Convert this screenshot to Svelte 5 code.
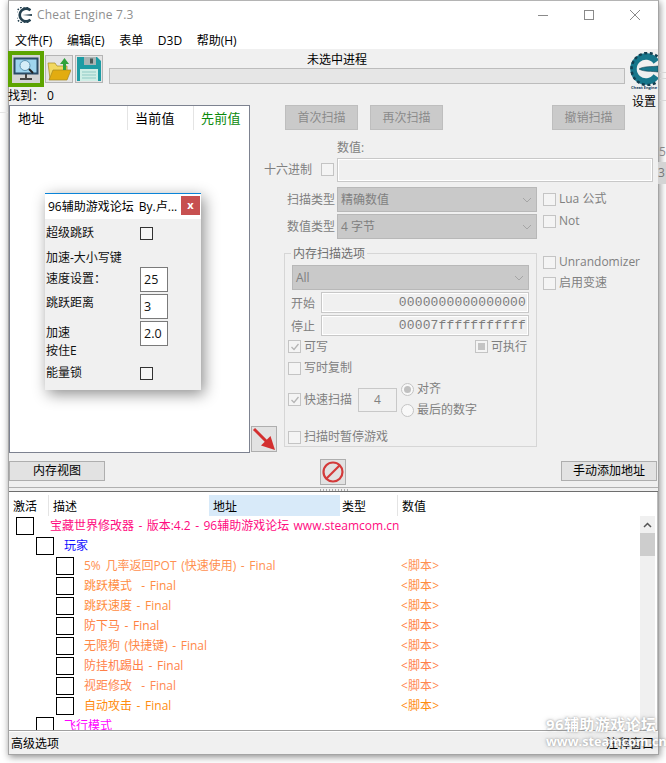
<script>
	const menus = ['文件(F)', '编辑(E)', '表单', 'D3D', '帮助(H)'];
	const cheats = [
		{ name: '5% 几率返回POT (快速使用) - Final', color: '#ff9050' },
		{ name: '跳跃模式  - Final', color: '#ff8c40' },
		{ name: '跳跃速度 - Final', color: '#ff8c40' },
		{ name: '防下马 - Final', color: '#ff8040' },
		{ name: '无限狗 (快捷键) - Final', color: '#ff8848' },
		{ name: '防挂机踢出 - Final', color: '#ff8048' },
		{ name: '视距修改  - Final', color: '#ff8850' },
		{ name: '自动攻击 - Final', color: '#ff8c10' }
	];
</script>

<div class="page">
	<div class="behind left-line"></div>
	<div class="behind right-line one"></div>
	<div class="behind right-line two"></div>
	<div class="behind right-line three"></div>
	<div class="behind cell-a">53</div>
	<div class="behind cell-b">3</div>

	<div class="window">
		<header class="titlebar">
			<svg class="title-icon" viewBox="0 0 30 30">
				<path d="M25 6A12 12 0 1 0 25 24" fill="none" stroke="#24404f" stroke-width="5" />
				<path d="M25 6A15 15 0 1 0 25 24" fill="none" stroke="#24404f" stroke-width="3" stroke-dasharray="3 3" />
				<path d="M10 15L28 13V17Z" fill="#24404f" />
			</svg>
			<span class="title-text">Cheat Engine 7.3</span>
			<div class="caption">
				<svg width="12" height="12" viewBox="0 0 12 12"><path d="M1 6.5H11" stroke="#8a8a8a" /></svg>
				<svg width="12" height="12" viewBox="0 0 12 12"><rect x="1.5" y="1.5" width="9" height="9" fill="none" stroke="#8a8a8a" /></svg>
				<svg width="12" height="12" viewBox="0 0 12 12"><path d="M1 1L11 11M11 1L1 11" stroke="#8a8a8a" /></svg>
			</div>
		</header>
		<nav class="menubar">
			{#each menus as m}<span>{m}</span>{/each}
		</nav>

		<section class="top">
			<div class="top-left">
				<div class="tools">
					<div class="tool active">
						<svg viewBox="0 0 26 26" width="26" height="26">
							<rect x="1.5" y="2.5" width="23" height="15" fill="#9fd4ee" stroke="#2a4b66" stroke-width="2" />
							<circle cx="12" cy="9.5" r="5" fill="#d4edf8" stroke="#5c93b3" />
							<path d="M16 13L20 17" stroke="#222" stroke-width="2" />
							<path d="M13 18V22M7 23H19" stroke="#444" stroke-width="2" />
						</svg>
					</div>
					<div class="tool">
						<svg viewBox="0 0 24 24" width="24" height="24">
							<path d="M1 6H8L10 9H20V22H3Z" fill="#f2d860" stroke="#a88a20" stroke-width=".7" />
							<path d="M6 13H24L20 23H2Z" fill="#e2ac10" stroke="#a88a20" stroke-width=".7" />
							<path d="M16 13V7H13L17.500 1L22 7H19V13Z" fill="#2fa23a" />
						</svg>
					</div>
					<div class="tool">
						<svg viewBox="0 0 24 24" width="24" height="24">
							<path d="M0 0H20L24 4V24H0Z" fill="#1d9ca4" />
							<rect x="7" y="0" width="12" height="8" fill="#a9b5b5" />
							<rect x="13" y="1.500" width="3" height="5" fill="#4b5a5a" />
							<rect x="3" y="12" width="18" height="12" fill="#cfeee6" />
							<path d="M5 15H19M5 18H19M5 21H19" stroke="#8fc9c4" />
						</svg>
					</div>
				</div>
				<div class="found">找到： 0</div>
			</div>
			<div class="progress-wrap">
				<div class="process-name">未选中进程</div>
				<div class="progress"></div>
			</div>
			<div class="logo-wrap">
				<svg class="logo" viewBox="0 0 28 34">
					<path d="M26.200 9.800A12.500 12.500 0 1 0 26.200 24.200" fill="none" stroke="#17778c" stroke-width="6.500" />
					<path d="M27.500 4.500A16 16 0 1 0 27.500 29.500" fill="none" stroke="#123f50" stroke-width="2.500" stroke-dasharray="3 2.500" />
					<path d="M9 17C14 14 22 15 28 14V20C22 19 14 20 9 17Z" fill="#17778c" stroke="#123f50" stroke-width=".6" />
				</svg>
				<span class="logo-caption">Cheat Engine</span>
				<span class="settings">设置</span>
			</div>
		</section>

		<section class="middle">
			<div class="address-list">
				<div class="addr-head">
					<span class="h-addr">地址</span>
					<span class="h-cur">当前值</span>
					<span class="h-prev">先前值</span>
				</div>
			</div>

			<div class="panel">
				<div class="scan-buttons">
					<button class="off" disabled>首次扫描</button>
					<button class="off" disabled>再次扫描</button>
					<button class="off undo" disabled>撤销扫描</button>
				</div>

				<div class="value-label">数值:</div>
				<div class="value-row">
					<span class="dim">十六进制</span>
					<span class="check"></span>
					<div class="field grow"></div>
				</div>

				<div class="type-area">
					<div class="type-rows">
						<div class="type-row">
							<span class="dim">扫描类型</span>
							<div class="combo"><span>精确数值</span><svg width="10" height="6" viewBox="0 0 10 6"><path d="M1 1L5 5L9 1" fill="none" stroke="#a5a5a5" /></svg></div>
						</div>
						<div class="type-row">
							<span class="dim">数值类型</span>
							<div class="combo"><span>4 字节</span><svg width="10" height="6" viewBox="0 0 10 6"><path d="M1 1L5 5L9 1" fill="none" stroke="#a5a5a5" /></svg></div>
						</div>
					</div>
					<div class="side-checks">
						<label class="opt"><span class="check"></span><span class="dim">Lua 公式</span></label>
						<label class="opt"><span class="check"></span><span class="dim">Not</span></label>
					</div>
				</div>

				<div class="lower">
					<button class="tool-btn arrow" aria-label="添加">
						<svg viewBox="0 0 24 24" width="24" height="24">
							<path d="M2 2L15 15" stroke="#d32f2f" stroke-width="3" />
							<path d="M9 18.500L23 23L18.500 9Z" fill="#d32f2f" />
						</svg>
					</button>
					<fieldset class="options">
						<legend>内存扫描选项</legend>
						<div class="combo wide"><span>All</span><svg width="10" height="6" viewBox="0 0 10 6"><path d="M1 1L5 5L9 1" fill="none" stroke="#a5a5a5" /></svg></div>
						<div class="range"><span class="dim">开始</span><div class="field mono">0000000000000000</div></div>
						<div class="range"><span class="dim">停止</span><div class="field mono">00007fffffffffff</div></div>
						<div class="perm">
							<label class="opt"><span class="check ticked"><svg width="10" height="10" viewBox="0 0 10 10"><path d="M1.500 5L4 7.500L8.500 2" fill="none" stroke="#b5b5b5" stroke-width="1.300" /></svg></span><span class="dim">可写</span></label>
							<label class="opt"><span class="check partial"><i></i></span><span class="dim">可执行</span></label>
						</div>
						<label class="opt cow"><span class="check"></span><span class="dim">写时复制</span></label>
						<div class="fast">
							<label class="opt"><span class="check ticked"><svg width="10" height="10" viewBox="0 0 10 10"><path d="M1.500 5L4 7.500L8.500 2" fill="none" stroke="#b5b5b5" stroke-width="1.300" /></svg></span><span class="dim">快速扫描</span></label>
							<div class="field small">4</div>
							<div class="radios">
								<label class="opt"><span class="radio on"></span><span class="dim">对齐</span></label>
								<label class="opt"><span class="radio"></span><span class="dim">最后的数字</span></label>
							</div>
						</div>
						<label class="opt pause"><span class="check"></span><span class="dim">扫描时暂停游戏</span></label>
					</fieldset>
					<div class="side-checks lower-checks">
						<label class="opt"><span class="check"></span><span class="dim">Unrandomizer</span></label>
						<label class="opt"><span class="check"></span><span class="dim">启用变速</span></label>
					</div>
				</div>
			</div>
		</section>

		<section class="actions">
			<button class="plain">内存视图</button>
			<button class="tool-btn stop" aria-label="停止">
				<svg viewBox="0 0 24 24" width="24" height="24">
					<circle cx="12" cy="12" r="9.500" fill="none" stroke="#d33a3a" stroke-width="2.200" />
					<path d="M5.500 18.500L18.500 5.500" stroke="#d33a3a" stroke-width="2.200" />
				</svg>
			</button>
			<button class="plain">手动添加地址</button>
		</section>

		<div class="splitter"><span></span></div>

		<section class="table">
			<div class="thead">
				<span class="c-active">激活</span>
				<span class="c-desc">描述</span>
				<span class="c-addr">地址</span>
				<span class="c-type">类型</span>
				<span class="c-val">数值</span>
			</div>
			<div class="tbody">
				<div class="rows">
					<div class="row"><span class="box"></span><span class="root-name">宝藏世界修改器 - 版本:4.2 - 96辅助游戏论坛 www.steamcom.cn</span></div>
					<div class="row lvl1"><span class="box"></span><span class="group-name">玩家</span></div>
					{#each cheats as c}
						<div class="row lvl2" style="color:{c.color}">
							<span class="box"></span>
							<span class="cheat-name">{c.name}</span>
							<span class="script">&lt;脚本&gt;</span>
						</div>
					{/each}
					<div class="row lvl1"><span class="box"></span><span class="fly-name">飞行模式</span></div>
				</div>
				<div class="scrollbar">
					<div class="sb-up"><svg width="9" height="6" viewBox="0 0 9 6"><path d="M1 5L4.500 1.500L8 5" fill="none" stroke="#555" stroke-width="1.500" /></svg></div>
					<div class="sb-thumb"></div>
				</div>
			</div>
		</section>

		<footer class="status">
			<span>高级选项</span>
			<span>注释窗口</span>
		</footer>
	</div>

	<div class="watermark">
		<div class="wm-cn">96辅助游戏论坛</div>
		<div class="wm-url">www.steamcom.cn</div>
	</div>

	<div class="dialog">
		<div class="dlg-head">
			<span class="dlg-title">96辅助游戏论坛 By.卢...</span>
			<span class="dlg-close">x</span>
		</div>
		<div class="dlg-body">
			<div class="dlg-row r-jump"><span>超级跳跃</span><span class="dlg-check"></span></div>
			<div class="dlg-note">加速-大小写键</div>
			<div class="dlg-row r-input r-speedset"><span>速度设置：</span><span class="dlg-input">25</span></div>
			<div class="dlg-row r-input r-dist"><span>跳跃距离</span><span class="dlg-input">3</span></div>
			<div class="dlg-row r-speed"><span>加速<br />按住E</span><span class="dlg-input">2.0</span></div>
			<div class="dlg-row r-lock"><span>能量锁</span><span class="dlg-check"></span></div>
		</div>
	</div>
</div>

<style>
	:global(body) {
		margin: 0;
		background: #fff;
	}
	.page {
		position: relative;
		width: 666px;
		height: 763px;
		overflow: hidden;
		background: #fff;
		color: #000;
		font-family: 'Open Sans', 'Noto Sans CJK SC', sans-serif;
		font-size: 12px;
		line-height: 16px;
	}
	button {
		font: inherit;
		padding: 0;
		margin: 0;
	}
	.behind {
		position: absolute;
	}
	.left-line {
		left: 0;
		top: 112px;
		width: 8px;
		height: 1px;
		background: #e4e4e4;
	}
	.right-line {
		left: 660px;
		width: 6px;
		height: 1px;
		background: #d8d8d8;
	}
	.one { top: 72px; }
	.two { top: 78px; }
	.three { top: 100px; }
	.cell-a {
		left: 659px;
		top: 144px;
		color: #888;
	}
	.cell-b {
		left: 658px;
		top: 162px;
		width: 8px;
		height: 22px;
		line-height: 22px;
		background: #d4d4d4;
		color: #777;
	}

	.window {
		box-sizing: border-box;
		margin-left: 8px;
		width: 651px;
		height: 755px;
		border: 1px solid #a4a4a4;
		border-top-color: #b4b4b4;
		background: #f0f0f0;
		box-shadow: 1px 2px 7px rgba(0, 0, 0, 0.45);
		display: flex;
		flex-direction: column;
	}
	.titlebar {
		height: 31px;
		box-sizing: border-box;
		padding: 0 0 3px 8px;
		background: #fff;
		display: flex;
		align-items: center;
		flex: none;
	}
	.title-icon {
		width: 16px;
		height: 16px;
		margin-right: 4px;
	}
	.title-text {
		color: #8f8f8f;
		font-size: 12px;
		letter-spacing: 0.2px;
	}
	.caption {
		margin-left: auto;
		display: flex;
		gap: 34px;
		padding-right: 17px;
	}
	.menubar {
		height: 17px;
		background: #fff;
		display: flex;
		gap: 14.6px;
		padding-left: 6px;
		align-items: center;
		flex: none;
	}
	.top {
		height: 56px;
		display: flex;
		flex: none;
	}
	.top-left {
		width: 100px;
		flex: none;
	}
	.tools {
		display: flex;
		align-items: center;
		gap: 2px;
		height: 39px;
		margin-left: -1px;
	}
	.tool {
		box-sizing: border-box;
		width: 28px;
		height: 28px;
		background: #e4e4e4;
		border: 1px solid #b4b4b4;
		display: flex;
		align-items: center;
		justify-content: center;
	}
	.tool.active {
		width: 36px;
		height: 36px;
		border: 4px solid #5da400;
		background: #d4d4d4;
		margin-right: -1px;
	}
	.found {
		margin-left: -1px;
		height: 16px;
		white-space: nowrap;
	}
	.progress-wrap {
		width: 516px;
		flex: none;
	}
	.process-name {
		text-align: center;
		height: 19px;
		line-height: 21px;
		padding-right: 60px;
	}
	.progress {
		box-sizing: border-box;
		height: 16px;
		background: #e6e6e6;
		border: 1px solid #bcbcbc;
	}
	.logo-wrap {
		flex: none;
		width: 28px;
		margin-left: 5px;
		display: flex;
		flex-direction: column;
		align-items: center;
	}
	.logo {
		width: 28px;
		height: 34px;
		flex: none;
		margin-top: 3px;
	}
	.logo-caption {
		font-size: 4px;
		line-height: 4px;
		font-weight: 700;
		color: #123a5a;
		white-space: nowrap;
	}
	.settings {
		margin-top: 4px;
		white-space: nowrap;
	}

	.middle {
		height: 348px;
		display: flex;
		flex: none;
	}
	.address-list {
		box-sizing: border-box;
		width: 241px;
		height: 348px;
		flex: none;
		background: #fff;
		border: 1px solid #7d8290;
	}
	.addr-head {
		display: flex;
		height: 24px;
		line-height: 24px;
		font-size: 13px;
		letter-spacing: 0.3px;
	}
	.h-addr {
		width: 118px;
		padding-left: 8px;
		box-sizing: border-box;
		border-right: 1px solid #e4e4e4;
	}
	.h-cur {
		width: 66px;
		padding-left: 7px;
		box-sizing: border-box;
		border-right: 1px solid #e4e4e4;
	}
	.h-prev {
		padding-left: 7px;
		color: #0a8a0a;
	}
	.dim {
		color: #808080;
		white-space: nowrap;
	}
	.panel {
		flex: 1;
		min-width: 0;
	}
	.scan-buttons {
		display: flex;
		gap: 12px;
		height: 25px;
		padding-left: 35px;
	}
	.off {
		box-sizing: border-box;
		width: 73px;
		height: 25px;
		background: #cacaca;
		border: 1px solid #bebebe;
		color: #8a8a8a;
	}
	.off.undo {
		margin-left: 97px;
	}
	.value-label {
		margin-top: 10px;
		margin-left: 87px;
		color: #808080;
		height: 16px;
		line-height: 16px;
	}
	.value-row {
		display: flex;
		align-items: center;
		margin-left: 14px;
		height: 25px;
		margin-top: 1px;
	}
	.check {
		box-sizing: border-box;
		display: inline-flex;
		align-items: center;
		justify-content: center;
		width: 13px;
		height: 13px;
		background: #f4f4f4;
		border: 1px solid #c4c4c4;
		flex: none;
	}
	.value-row .check {
		margin-left: 9px;
		margin-right: 3px;
	}
	.field {
		box-sizing: border-box;
		border: 1px solid #c8c8c8;
		box-shadow: inset 0 0 0 1px #fff;
		background: #f0f0f0;
	}
	.grow {
		width: 316px;
		height: 24px;
	}
	.type-area {
		display: flex;
		margin-top: 5px;
	}
	.type-rows {
		width: 287px;
		flex: none;
	}
	.type-row {
		display: flex;
		justify-content: flex-end;
		align-items: center;
		gap: 2px;
		height: 25px;
		margin-bottom: 2px;
	}
	.combo {
		box-sizing: border-box;
		display: flex;
		align-items: center;
		justify-content: space-between;
		width: 200px;
		height: 25px;
		padding: 0 4px 0 3px;
		background: #c9c9c9;
		border: 1px solid #b8b8b8;
		color: #808080;
	}
	.side-checks {
		margin-left: 6px;
		display: flex;
		flex-direction: column;
		gap: 6px;
		margin-top: 4px;
	}
	.opt {
		display: flex;
		align-items: center;
		gap: 3px;
		height: 16px;
		white-space: nowrap;
	}
	.lower {
		display: flex;
		margin-top: 3px;
		align-items: flex-start;
	}
	.tool-btn {
		box-sizing: border-box;
		width: 26px;
		height: 26px;
		background: #e2e2e2;
		border: 1px solid #aeaeae;
		display: flex;
		align-items: center;
		justify-content: center;
	}
	.arrow {
		margin-left: 1px;
		margin-top: 182px;
		flex: none;
	}
	fieldset {
		box-sizing: border-box;
		width: 253px;
		height: 203px;
		margin: 0 0 0 7px;
		padding: 3px 7px 0 7px;
		border: 1px solid #d6d6d6;
		flex: none;
	}
	legend {
		margin-left: -1px;
		padding: 2px 2px 0 2px;
		color: #6f6f6f;
		line-height: 16px;
		font-size: 12px;
	}
	.combo.wide {
		width: 237px;
		margin-top: 0;
	}
	.range {
		display: flex;
		align-items: flex-start;
		gap: 6px;
		height: 23px;
		line-height: 23px;
		margin-left: -1px;
		margin-top: 2px;
	}
	.range + .range {
		margin-top: 0;
	}
	.mono {
		width: 208px;
		height: 21px;
		line-height: 19px;
		text-align: right;
		padding-right: 2px;
		font-family: 'Liberation Mono', monospace;
		font-size: 13px;
		letter-spacing: 0.15px;
		color: #7c7c7c;
	}
	.perm {
		display: flex;
		justify-content: space-between;
		margin: 0 2px 0 -4px;
		height: 17px;
		align-items: center;
	}
	.partial i {
		width: 7px;
		height: 7px;
		background: #c4c4c4;
	}
	.cow {
		margin: 5px 0 0 -4px;
	}
	.fast {
		display: flex;
		align-items: center;
		margin: 3px 0 0 -4px;
		height: 41px;
	}
	.small {
		width: 39px;
		height: 24px;
		line-height: 22px;
		text-align: center;
		margin-left: 6px;
		color: #808080;
		background: #f0f0f0;
		box-shadow: none;
	}
	.radios {
		margin-left: 4px;
		display: flex;
		flex-direction: column;
		gap: 5px;
	}
	.radio {
		box-sizing: border-box;
		display: flex;
		align-items: center;
		justify-content: center;
		width: 13px;
		height: 13px;
		border-radius: 50%;
		border: 1px solid #c4c4c4;
		background: #f8f8f8;
	}
	.radio.on::after {
		content: '';
		width: 7px;
		height: 7px;
		border-radius: 50%;
		background: #c0c0c0;
	}
	.pause {
		margin: 9px 0 0 -4px;
	}
	.lower-checks {
		margin-top: 10px;
		gap: 5px;
	}

	.actions {
		height: 34px;
		display: grid;
		grid-template-columns: 311px 26px 1fr;
		align-items: start;
		padding-top: 6px;
		box-sizing: border-box;
		flex: none;
	}
	.plain {
		box-sizing: border-box;
		width: 96px;
		height: 20px;
		margin-top: 2px;
		background: #e2e2e2;
		border: 1px solid #aeaeae;
		line-height: 16px;
	}
	.actions .plain:last-child {
		justify-self: end;
		margin-right: 1px;
	}
	.splitter {
		height: 3px;
		flex: none;
		border-top: 1px solid #b0b0b0;
		border-bottom: 1px solid #6e6e6e;
		display: flex;
		justify-content: center;
	}
	.splitter span {
		width: 28px;
		height: 2px;
		margin-top: 1px;
		background: repeating-linear-gradient(90deg, #aaa 0 1px, transparent 1px 3px);
	}
	.table {
		height: 239px;
		flex: none;
		background: #fff;
		border-bottom: 1px solid #a0a0a0;
		border-right: 1px solid #bcbcbc;
		display: flex;
		flex-direction: column;
		box-sizing: border-box;
		overflow: hidden;
		padding-top: 3px;
	}
	.thead {
		display: flex;
		height: 21px;
		line-height: 23px;
		flex: none;
	}
	.thead span {
		box-sizing: border-box;
		white-space: nowrap;
	}
	.c-active { width: 40px; padding-left: 4px; border-right: 1px solid #e4e4e4; }
	.c-desc { width: 160px; padding-left: 4px; }
	.c-addr { width: 131px; padding-left: 4px; background: #d8eaf9; }
	.c-type { width: 58px; padding-left: 2px; border-right: 1px solid #e4e4e4; }
	.c-val { padding-left: 4px; }
	.tbody {
		flex: 1;
		min-height: 0;
		display: flex;
		overflow: hidden;
	}
	.rows {
		flex: 1;
		min-width: 0;
		overflow: hidden;
	}
	.row {
		display: flex;
		align-items: center;
		height: 20px;
		padding-left: 7px;
		white-space: pre;
	}
	.lvl1 { padding-left: 27px; }
	.lvl2 { padding-left: 47px; }
	.box {
		box-sizing: border-box;
		width: 18px;
		height: 18px;
		border: 1px solid #000;
		background: #fff;
		flex: none;
	}
	.root-name {
		color: #ff0a80;
		margin-left: 16px;
		word-spacing: 1.3px;
	}
	.group-name {
		color: #1010ff;
		margin-left: 10px;
	}
	.fly-name {
		color: #ff00ff;
		margin-left: 10px;
	}
	.cheat-name {
		margin-left: 10px;
		width: 317px;
		word-spacing: 1.5px;
	}
	.script {
		letter-spacing: 0.1px;
	}
	.scrollbar {
		width: 15px;
		margin-right: 2px;
		background: #f0f0f0;
		flex: none;
	}
	.sb-up {
		height: 17px;
		display: flex;
		align-items: center;
		justify-content: center;
	}
	.sb-thumb {
		height: 23px;
		background: #cdcdcd;
	}
	.status {
		flex: 1;
		display: flex;
		justify-content: space-between;
		align-items: center;
		padding: 2px 4px 0 2px;
		background: #f0f0f0;
		border-top: 1px solid #fff;
	}

	.watermark {
		position: absolute;
		left: 546px;
		top: 715px;
		width: 120px;
		color: #fff;
		font-weight: 700;
		text-shadow: 0 0 2px rgba(120, 120, 120, 0.65), 0 0 4px rgba(140, 140, 140, 0.5);
		white-space: nowrap;
	}
	.wm-cn {
		font-size: 15px;
		line-height: 18px;
		letter-spacing: 0.4px;
	}
	.wm-url {
		font-size: 12.700px;
		line-height: 16px;
	}

	.dialog {
		position: absolute;
		left: 45px;
		top: 193px;
		width: 156px;
		height: 196px;
		background: #f0f0f0;
		border-top: 1px solid #0a84d8;
		box-shadow: 3px 4px 14px rgba(0, 0, 0, 0.45);
	}
	.dlg-head {
		display: flex;
		height: 25px;
		background: #fff;
		align-items: center;
		padding-left: 3px;
		white-space: pre;
		word-spacing: 2px;
	}
	.dlg-title {
		flex: 1;
		overflow: hidden;
	}
	.dlg-close {
		align-self: flex-start;
		width: 19px;
		height: 19px;
		margin: 2px 1px 0 0;
		background: #c75050;
		color: #fff;
		text-align: center;
		line-height: 17px;
		font-weight: 700;
		font-size: 11px;
	}
	.dlg-body {
		padding: 0 0 0 1px;
	}
	.dlg-row {
		display: grid;
		grid-template-columns: 94px 1fr;
		color: #111;
	}
	.dlg-check {
		box-sizing: border-box;
		display: block;
		width: 13px;
		height: 13px;
		border: 1px solid #333;
		background: #f6f6f6;
	}
	.r-jump {
		margin-top: 6px;
		align-items: center;
		height: 14px;
	}
	.dlg-note {
		margin-top: 11px;
		height: 16px;
		color: #111;
	}
	.dlg-input {
		box-sizing: border-box;
		display: block;
		width: 28px;
		height: 25px;
		border: 1px solid #7a7a7a;
		background: #fff;
		padding-left: 3px;
		line-height: 24px;
		font-size: 12.500px;
	}
	.r-input {
		height: 25px;
		margin-bottom: 2px;
	}
	.r-speedset {
		margin-top: 1px;
	}
	.r-speedset span:first-child {
		padding-top: 4px;
	}
	.r-dist span:first-child {
		padding-top: 1px;
	}
	.r-speed {
		height: 38px;
		margin-top: 1px;
	}
	.r-speed span:first-child {
		line-height: 18px;
		padding-top: 3px;
	}
	.r-lock {
		margin-top: 6px;
		height: 14px;
		align-items: center;
	}
</style>
